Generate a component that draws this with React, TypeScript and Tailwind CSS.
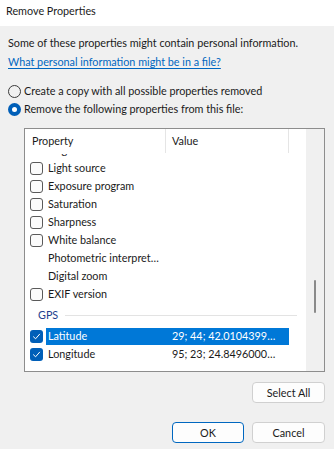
import React from "react";

const font = { fontFamily: 'Lato, "Noto Sans", sans-serif' };

function Check({ checked }: { checked?: boolean }) {
  if (checked) {
    return (
      <div className="w-[13px] h-[13px] rounded-[3px] bg-[#005fb8] flex items-center justify-center">
        <svg width="9" height="9" viewBox="0 0 9 9" fill="none">
          <path d="M1.5 4.8 L3.6 6.8 L7.6 2.2" stroke="white" strokeWidth="1" strokeLinecap="round" strokeLinejoin="round" />
        </svg>
      </div>
    );
  }
  return <div className="w-[13px] h-[13px] rounded-[3px] border border-[#5a5a5a] bg-[#fbfbfb]" />;
}

function Row({
  label,
  value,
  box,
  checked,
  selected,
}: {
  label: string;
  value?: string;
  box?: boolean;
  checked?: boolean;
  selected?: boolean;
}) {
  return (
    <div className="h-[18px] flex items-center">
      <div className="w-[21px] flex justify-end pr-[3px]">{box ? <Check checked={checked} /> : null}</div>
      <div className={"flex h-[17px] items-center w-[243px] leading-[16px] " + (selected ? "bg-[#0078d7] text-white" : "text-[#1a1a1a]")}>
        <div className="w-[120px] pl-[2px] whitespace-nowrap">{label}</div>
        <div className="pl-[6px] whitespace-nowrap">{value}</div>
      </div>
    </div>
  );
}

export default function App() {
  return (
    <div className="w-[334px] h-[449px] flex flex-col text-[10.8px] leading-[16px] bg-[#f0f0f0] text-[#1a1a1a]" style={font}>
      <div className="h-[26px] bg-white flex items-center pl-[6px] pb-[4px]">Remove Properties</div>
      <div className="flex-1 flex flex-col pl-[8px] pr-[9px]">
        <div className="mt-[7.5px] h-[19px] flex items-center whitespace-nowrap">Some of these properties might contain personal information.</div>
        <div className="h-[19px] flex items-center whitespace-nowrap">
          <span className="text-[#0067c0] underline underline-offset-2">What personal information might be in a file?</span>
        </div>
        <div className="mt-[10.5px] h-[18px] flex items-center gap-[3px] whitespace-nowrap">
          <div className="w-[13px] h-[13px] rounded-full border border-[#3a3a3a]" />
          <span>Create a copy with all possible properties removed</span>
        </div>
        <div className="h-[18px] flex items-center gap-[3px] whitespace-nowrap">
          <div className="w-[13px] h-[13px] rounded-full bg-[#005fb8] flex items-center justify-center">
            <div className="w-[5px] h-[5px] rounded-full bg-white" />
          </div>
          <span>Remove the following properties from this file:</span>
        </div>
        <div className="ml-[16px] mt-[10px] h-[244px] border border-[#8d8d8d] bg-white flex">
          <div className="w-[282px] flex flex-col">
            <div className="h-[25px] flex shrink-0">
              <div className="w-[141px] pl-[7px] flex items-center border-r border-[#e5e5e5] mb-[1px]">Property</div>
              <div className="w-[123px] pl-[6px] flex items-center border-r border-[#e5e5e5] mb-[1px]">Value</div>
            </div>
            <div className="flex-1 overflow-hidden">
              <div className="-mt-[13px]">
                <Row label="Brightness" />
                <Row label="Light source" box />
                <Row label="Exposure program" box />
                <Row label="Saturation" box />
                <Row label="Sharpness" box />
                <Row label="White balance" box />
                <Row label="Photometric interpret…" />
                <Row label="Digital zoom" />
                <Row label="EXIF version" box />
                <div className="h-[24px] flex items-center pl-[13px]">
                  <span className="text-[#1e3f8f]">GPS</span>
                  <div className="ml-[7px] w-[232px] h-px bg-[#e3e3e3]" />
                </div>
                <Row label="Latitude" value="29; 44; 42.0104399…" box checked selected />
                <Row label="Longitude" value="95; 23; 24.8496000…" box checked />
              </div>
            </div>
          </div>
          <div className="w-[18px] bg-[#f0f0f0] relative">
            <div className="absolute left-[8px] top-[151px] w-[2px] h-[33px] rounded-full bg-[#8a8a8a]" />
          </div>
        </div>
        <div className="mt-[10px] flex justify-end">
          <div className="w-[73px] h-[21px] rounded-[4px] border border-[#d0d0d0] bg-[#fdfdfd] flex items-center justify-center">Select All</div>
        </div>
        <div className="mt-[19px] flex justify-end gap-[8px]">
          <div className="w-[72px] h-[21px] rounded-[4px] border border-[#0067c0] bg-[#fdfdfd] flex items-center justify-center">OK</div>
          <div className="w-[73px] h-[21px] rounded-[4px] border border-[#d0d0d0] bg-[#fdfdfd] flex items-center justify-center">Cancel</div>
        </div>
      </div>
    </div>
  );
}
